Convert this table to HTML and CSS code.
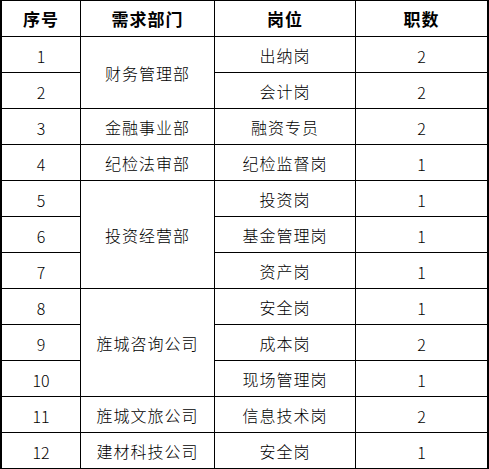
FILE: index.html
```html
<!DOCTYPE html>
<html lang="zh-CN">
<head>
<meta charset="utf-8">
<title>岗位表</title>
<link rel="stylesheet" href="styles.css">
</head>
<body>
<div class="grid">
  <div class="cell head">序号</div>
  <div class="cell head">需求部门</div>
  <div class="cell head">岗位</div>
  <div class="cell head">职数</div>

  <div class="cell num">1</div>
  <div class="cell span2">财务管理部</div>
  <div class="cell">出纳岗</div>
  <div class="cell num">2</div>

  <div class="cell num">2</div>
  <div class="cell">会计岗</div>
  <div class="cell num">2</div>

  <div class="cell num">3</div>
  <div class="cell">金融事业部</div>
  <div class="cell">融资专员</div>
  <div class="cell num">2</div>

  <div class="cell num">4</div>
  <div class="cell">纪检法审部</div>
  <div class="cell">纪检监督岗</div>
  <div class="cell num">1</div>

  <div class="cell num">5</div>
  <div class="cell span3">投资经营部</div>
  <div class="cell">投资岗</div>
  <div class="cell num">1</div>

  <div class="cell num">6</div>
  <div class="cell">基金管理岗</div>
  <div class="cell num">1</div>

  <div class="cell num">7</div>
  <div class="cell">资产岗</div>
  <div class="cell num">1</div>

  <div class="cell num">8</div>
  <div class="cell span3">旌城咨询公司</div>
  <div class="cell">安全岗</div>
  <div class="cell num">1</div>

  <div class="cell num">9</div>
  <div class="cell">成本岗</div>
  <div class="cell num">2</div>

  <div class="cell num">10</div>
  <div class="cell">现场管理岗</div>
  <div class="cell num">1</div>

  <div class="cell num">11</div>
  <div class="cell">旌城文旅公司</div>
  <div class="cell">信息技术岗</div>
  <div class="cell num">2</div>

  <div class="cell num">12</div>
  <div class="cell">建材科技公司</div>
  <div class="cell">安全岗</div>
  <div class="cell num">1</div>
</div>
</body>
</html>
```

FILE: styles.css
```css
html, body {
  margin: 0;
  padding: 0;
  background: #ffffff;
}

.grid {
  display: grid;
  width: 489px;
  box-sizing: border-box;
  padding: 1px 2px 1px 2px;
  background: #000000;
  gap: 1px;
  grid-template-columns: 78px 133px 140px 131px;
  grid-auto-rows: 35px;
  font-family: "Noto Sans CJK SC", "DejaVu Sans", sans-serif;
  font-size: 16px;
  font-weight: 300;
  color: #000000;
}

.cell {
  background: #ffffff;
  display: flex;
  align-items: center;
  justify-content: center;
  letter-spacing: 1px;
  line-height: 1;
}

.head {
  font-weight: 700;
  font-size: 17px;
}

.num {
  letter-spacing: 0;
  padding-top: 2px;
}

.span2 {
  grid-row: span 2;
}

.span3 {
  grid-row: span 3;
}
```
